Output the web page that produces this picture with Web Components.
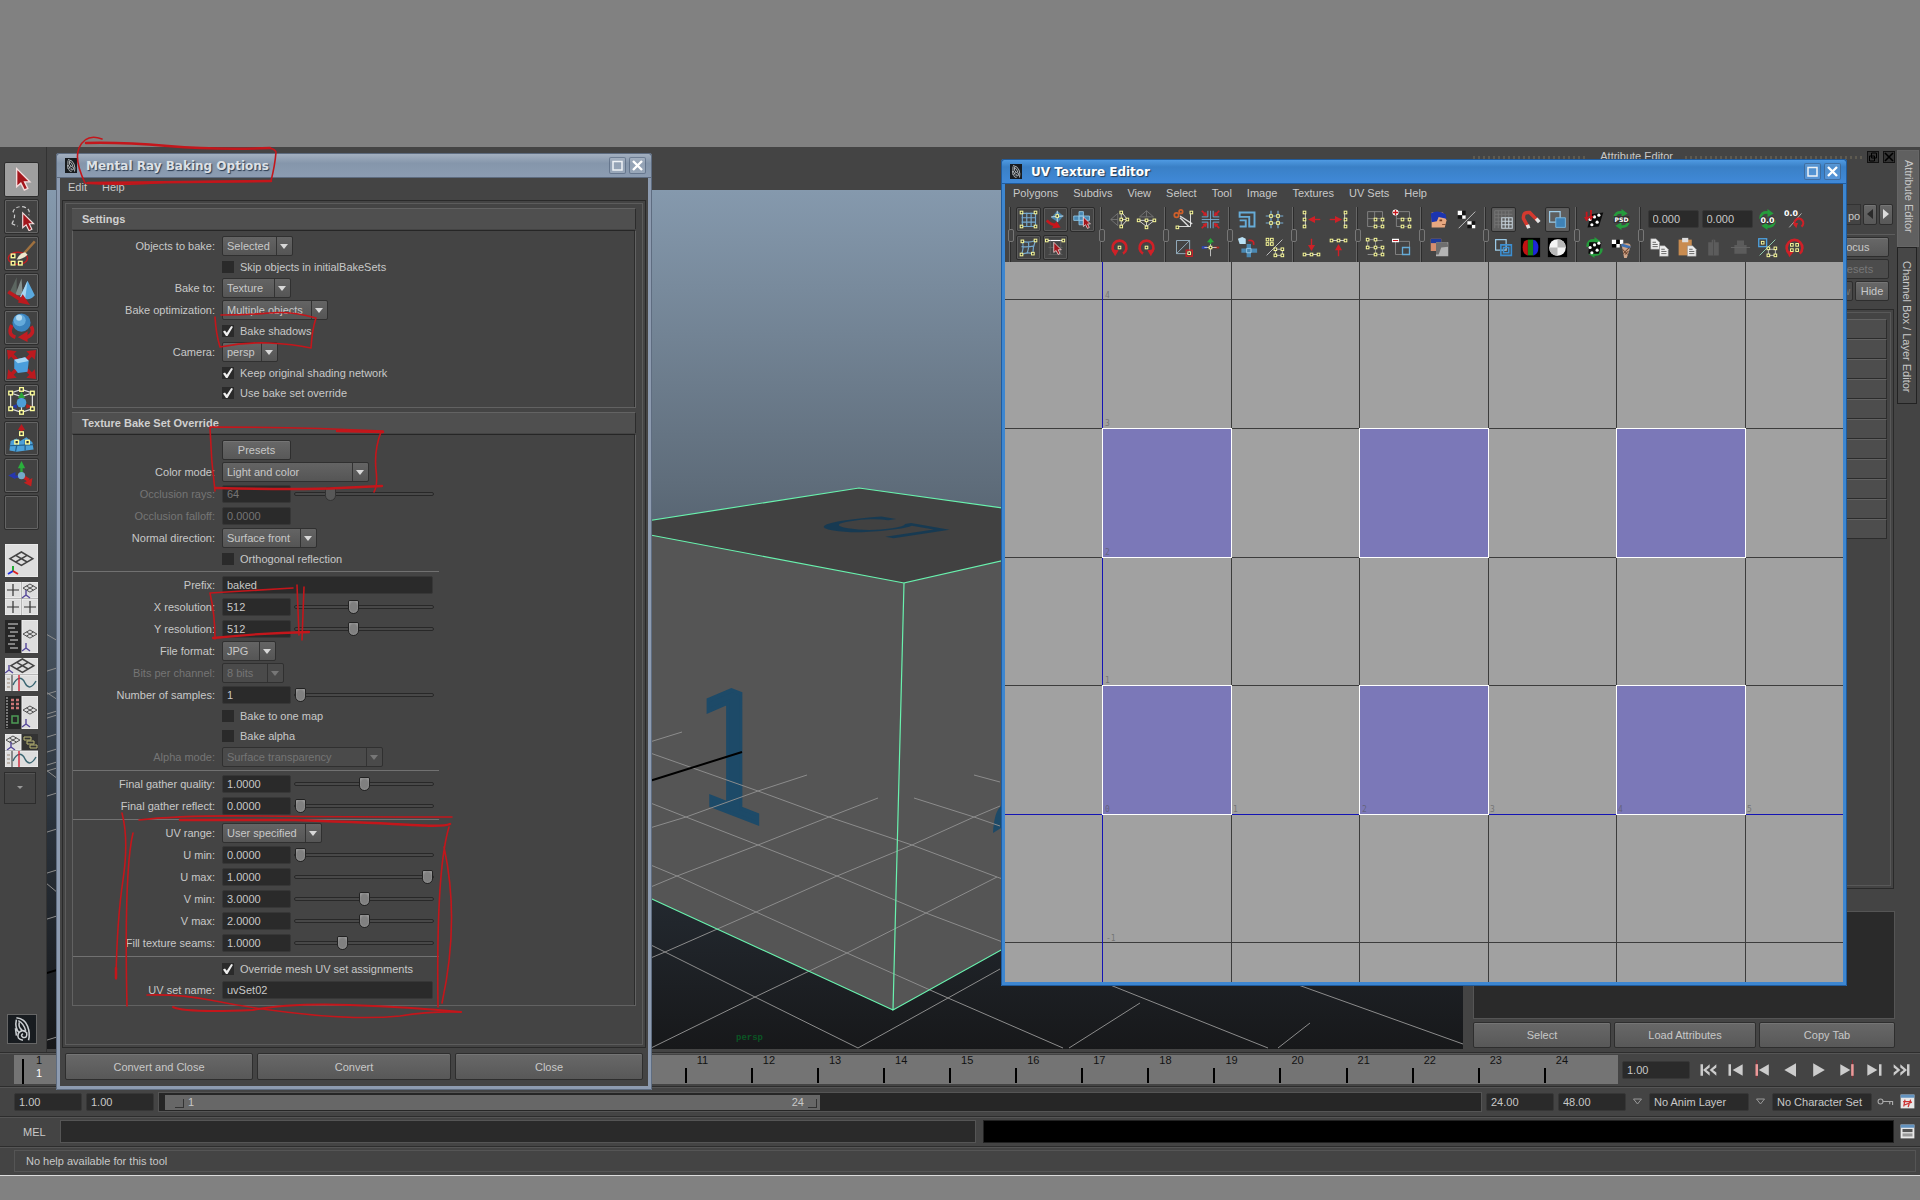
<!DOCTYPE html>
<html lang="en">
<head>
<meta charset="utf-8">
<title>Mental Ray Baking Options</title>
<style>
    body {
        margin: 0;
        min-height: 100vh;
        background: #818181;
        color: #c8c8c8;
        font: 11px/14px "Liberation Sans", Arial, sans-serif;
    }
</style>
</head>
<body>
<maya-desktop></maya-desktop>

<script>
// ---------- shared styles ----------
const base = `
    :host, * { box-sizing: border-box; }
    button, input, select { font: inherit; color: inherit; margin: 0; border-radius: 0; outline: none; }
    button { padding: 0; cursor: pointer; }
    .push {
        background: linear-gradient(#686868, #585858);
        border: 1px solid #2e2e2e;
        border-radius: 2px;
        box-shadow: inset 0 1px #757575;
    }
    .push:disabled { background: #4c4c4c; color: #777; box-shadow: none; }
    .field {
        background: #2a2a2a;
        border: 1px solid #373737;
        border-radius: 2px;
        padding: 0 4px;
        height: 18px;
        min-width: 0;
    }
`;

// ---------- icon helpers ----------
const dot = (x, y, c = '#ffff9c') => `<rect x="${x - 1.5}" y="${y - 1.5}" width="3" height="3" fill="#333" stroke="${c}" stroke-width="1.1"/>`;
const dots = (list, c) => list.map(p => dot(p[0], p[1], c)).join('');
const line = (d, c = '#75a9cf', w = 1.3) => `<path d="${d}" fill="none" stroke="${c}" stroke-width="${w}"/>`;
const fill = (d, c) => `<path d="${d}" fill="${c}"/>`;
const cursor = (x, y, s = 1) => `<path transform="translate(${x} ${y}) scale(${s})" d="M0 0V13L3 10.500L5.500 15.500L8 14.300L5.700 9.500H9.500Z" fill="#a3161c" stroke="#f4dede" stroke-width="1"/>`;
const cross = 'M8 3h5v5h7v5h-7v5H8v-5H2V8h6z';
const faces = `<g fill="#fff"><circle cx="7" cy="12" r="1.800"/><circle cx="12" cy="9" r="1.800"/><circle cx="17" cy="7" r="1.800"/><circle cx="9" cy="18" r="1.800"/><circle cx="15" cy="15" r="1.800"/></g>`;
const sheet = (x, y) => `<path d="M${x} ${y}h6l4 4v8H${x}z" fill="#eee" stroke="#888" stroke-width=".6"/><path d="M${x + 2} ${y + 4}h4M${x + 2} ${y + 6.5}h6M${x + 2} ${y + 9}h6" stroke="#555" stroke-width="1"/>`;
const cycle = line('M4 11Q4 3 13 4', '#259c3c', 3) + fill('M12 0L19 5L12 9z', '#259c3c') + line('M20 13Q20 21 11 20', '#259c3c', 3) + fill('M12 15L5 19L12 24z', '#259c3c');
const ring = line('M8 19A8 8 0 1 1 16 19', '#cf2027', 3);

const icons = {
    lattice: line('M4 5h16M4 10h16M4 15h16M4 20h16M5 4v16M10 4v16M15 4v16M20 4v16') + dots([[4, 4], [20, 4], [4, 20], [20, 20]]),
    flip: fill('M14 2l7 6-6 7-8-5z', '#4b83a8') + line('M14 2v13M7 9l14-1', '#cfe3ef', 1) + dot(14, 8) + line('M2 13Q7 19 15 18', '#c8161c', 3) + fill('M13 14l5 7-10 1z', '#c8161c'),
    shellSelect: fill(cross, '#4a88b2') + line('M8 8h5v5H8zM2 8h18v5H2zM8 3h5v15H8z', '#8fc3e4', 1) + cursor(13, 9, .85),
    smudge: line('M5 5Q12 7 20 4M4 11Q11 12 19 10M4 20Q10 17 17 19M5 5Q7 12 4 20M12 6Q13 13 10 19M20 4Q17 11 17 19') + dots([[5, 5], [20, 4], [4, 20], [17, 19]]),
    edgeSelect: line('M2 4h20', '#fff') + line('M6 4v16M18 4v16M4 20h16M4 12h16', '#606060', 1) + dots([[2, 4], [21, 4]]) + cursor(10, 6, .9),
    flipU: line('M10 5L2 12L10 19zM2 12h8', '#777', 1) + line('M14 3L21 12L14 20zM14 12h7', '#ddd', 1) + dots([[14, 4], [14, 20], [21, 12], [14, 12]]),
    flipV: line('M4 9L12 2L20 9zM12 2v7', '#777', 1) + line('M3 13h18L12 20zM12 13v7', '#ddd', 1) + dots([[3, 13], [21, 13], [12, 21], [12, 13]]),
    rotL: ring + fill('M3 14l8 1-4 7z', '#cf2027') + dot(12, 12),
    rotR: ring + fill('M21 14l-8 1 4 7z', '#cf2027') + dot(12, 12),
    cut: line('M8 8L22 17M8 10L18 20', '#ddd', 1.6) + line('M20 4V20H5', '#eee', 1) + `<circle cx="4" cy="7" r="2.500" fill="none" stroke="#d0602a" stroke-width="2"/><circle cx="9" cy="3" r="2" fill="none" stroke="#d0602a" stroke-width="2"/>` + dots([[21, 4], [5, 21]]),
    split: line('M9 2v7H2M15 2v7h7M9 22v-7H2M15 22v-7h7M12 2v20M2 12h20', '#79aed3', 1) + line('M2 2l5 5M22 2l-5 5M2 22l5-5M22 22l-5-5', '#cf2027', 2) + fill('M8 8l-5-1 4-4zM16 8l5-1-4-4zM8 16l-5 1 4 4zM16 16l5 1-4 4z', '#cf2027'),
    sew: line('M4 4h15v15H4zM4 19L19 4', '#9bb8ca', 1) + `<rect x="15" y="15" width="7" height="7" fill="none" stroke="#d31d23" stroke-width="1.400"/>` + dot(18.5, 18.5),
    move: line('M12 8V3', '#2aa63a', 2) + fill('M8 6l4-5 4 5z', '#2aa63a') + line('M8 12H2', '#3048b6', 3) + line('M16 12h6', '#b9291f', 2) + line('M12 8v14M5 12h14', '#ccc', 1) + dot(12, 12),
    layout: line('M3 4h17v16h-6V9H3zM3 13h7v7H3', '#66acd8', 2.2),
    grid: line('M8 2v20M16 2v20M2 8h20M2 16h20', '#79aed3', 1.4) + dots([[8, 8], [16, 8], [8, 16], [16, 16]]),
    unfold: `<g transform="translate(3 5)">${fill(cross, '#4a88b2')}${line('M8 8h5v5H8z', '#9acbe9', 1)}</g>` + fill('M1 2l5-2 4 2v6H3z', '#b9e0f4') + line('M13 4Q20 3 19 9', '#cf2027', 2),
    align: line('M3 21L21 3', '#ccc', 1) + line('M13 14h8v7h-8z', '#ccc', 1) + dots([[4, 3], [9, 3], [4, 8], [9, 8], [13, 14], [21, 14], [13, 21], [21, 21]]),
    minU: line('M5 4v16', '#ddd', 1) + line('M12 12h10', '#cf2027', 1.6) + fill('M8 12l8-4v8z', '#cf2027') + dots([[4, 4], [4, 12], [4, 20]]),
    maxU: line('M19 4v16', '#ddd', 1) + line('M2 12h10', '#cf2027', 1.6) + fill('M16 12l-8-4v8z', '#cf2027') + dots([[20, 4], [20, 12], [20, 20]]),
    minV: line('M4 20h16', '#ddd', 1) + line('M12 2v10', '#cf2027', 1.6) + fill('M12 16l-4-7h8z', '#cf2027') + dots([[4, 20], [12, 20], [20, 20]]),
    maxV: line('M4 4h16', '#ddd', 1) + line('M12 12v10', '#cf2027', 1.6) + fill('M12 8l-4 7h8z', '#cf2027') + dots([[4, 4], [12, 4], [20, 4]]),
    iso: line('M3 3h17v17H3zM3 11h17M11 3v17', '#888', 1) + dots([[12, 12], [20, 12], [12, 20], [20, 20]]),
    isoAdd: line('M5 3h15v17H5zM5 11h15', '#888', 1) + dots([[12, 12], [20, 12], [12, 20], [20, 20]]) + `<circle cx="4" cy="4" r="3.500" fill="#fff"/>` + line('M1 4h6M4 1v6', '#c8161c', 1.5),
    isoGrid: line('M3 3h9v9H3zM12 12h8v8h-8zM12 4h8M3 20h8', '#999', 1) + dots([[3, 3], [12, 3], [3, 12], [12, 12], [20, 12], [12, 20], [20, 20]]),
    isoSub: line('M4 5h16v15H4z', '#888', 1) + line('M12 12h8v8h-8z', '#66acd8', 1.5) + `<rect x="0" y="2" width="8" height="4" fill="#fff"/>` + line('M1 4h6', '#c8161c', 1.2),
    portrait: fill('M3 4h13l4 9-2 8H3z', '#e8a880') + fill('M2 5Q10 0 19 6L20 11L11 9L9 14L3 15z', '#1c35b0') + fill('M12 12h3v2h-3zM15 17h4v1h-4z', '#703c22'),
    checkers: line('M3 22L22 3', '#ccc', 1) + fill('M2 2h5v5H2zM7 7h4v4H7z', '#fff') + fill('M7 2h4v5H7zM2 7h5v4H2z', '#111') + fill('M13 14h5v4h-5zM18 18h4v4h-4z', '#fff') + fill('M18 14h4v4h-4zM13 18h5v4h-5z', '#111'),
    portraitGray: fill('M2 2h12v14H2z', '#d58e6f') + fill('M2 2h12v5H2z', '#1f3b9c') + fill('M8 6h14v16H8z', '#b4b4b4') + fill('M8 6h13l1 5-8 1-3 8H8z', '#6e6e6e'),
    dense: line('M2 2v20M6 2v20M10 2v20M14 2v7M18 2v7M2 2h20M2 6h20M2 10h7M2 14h7M2 18h7', '#777', 1) + line('M10 10h12v12H10zM14 10v12M18 10v12M10 14h12M10 18h12', '#c7d3dc', 1.2),
    magnet: `<path d="M9 20L4 11Q3 3 11 4L20 13" fill="none" stroke="#d43a2f" stroke-width="4"/><path d="M8.500 18l1.500 4M18.500 11l3.500 4" stroke="#e4e4e4" stroke-width="4"/>`,
    overlap: line('M3 3h12v12H3z', '#9ccbe8', 1.4) + `<path d="M10 10h11v11H10z" fill="#3f82b6" stroke="#7bbce6"/>`,
    overlapLine: line('M3 3h12v12H3z', '#9ccbe8', 1.4) + line('M9 9h12v12H9zM12 12h6v6h-6z', '#3c8fd2', 1.8),
    rgb: '<rect x="1" y="1" width="22" height="22" fill="#000"/>' + fill('M9 3Q3 4 3 12T9 21z', '#c31212') + fill('M9 3h6v18H9z', '#17831a') + fill('M15 3Q21 4 21 12T15 21z', '#1d26d8'),
    alpha: '<rect x="1" y="1" width="22" height="22" fill="#000"/><circle cx="12" cy="12" r="9.500" fill="#f4f4f4"/>' + fill('M12 12V2.500A9.500 9.500 0 0 1 21.500 12zM12 12v9.500A9.500 9.500 0 0 1 2.500 12z', '#b9b9b9'),
    bake: fill('M8 6L22 4L17 20L4 21z', '#0a0a0a') + faces + line('M3 3v10M8 1v9', '#c8161c', 2) + fill('M0 9h6l-3 5zM5 8h6l-3 5z', '#c8161c'),
    psd: cycle + '<rect x="3" y="8" width="18" height="8" fill="#333"/><text x="12" y="15" text-anchor="middle" font-family="DejaVu Sans" font-size="7" font-weight="700" fill="#fff">PSD</text>',
    bakeCycle: cycle + fill('M6 6h14L17 19H5z', '#0a0a0a') + faces,
    cone: fill('M1 3h5v5H1zM6 8h4v4H6zM10 3h4v5h-4z', '#fff') + fill('M6 3h4v5H6zM1 8h5v4H1z', '#000') + fill('M12 8Q24 5 22 12L18 24H15z', '#d0a68a') + line('M12 9l10 3', '#3f72b4', 3) + line('M13 14l6 6M21 12l-7 7M20 16l-4 4', '#6e4630', 1.2),
    zeroCycle: cycle + '<text x="12" y="16" text-anchor="middle" font-family="DejaVu Sans" font-size="9" font-weight="700" fill="#fff" stroke="#333" stroke-width="2" paint-order="stroke">0.0</text>',
    zeroRing: line('M6 21L20 5', '#bbb', 1) + line('M13 19A5 5 0 1 1 20 20', '#cf2027', 2.5) + fill('M10 16h6l-2 6z', '#cf2027') + '<text x="8" y="8" text-anchor="middle" font-family="DejaVu Sans" font-size="9" font-weight="700" fill="#fff">0.0</text>',
    copy: sheet(2, 2) + sheet(12, 10),
    paste: '<rect x="3" y="3" width="15" height="18" fill="#c98c50"/><rect x="7" y="1" width="7" height="5" fill="#ddd"/>' + sheet(13, 10),
    offU: fill('M6 6h4V3h4v3h4v15H6z', '#5c5c5c') + line('M12 2v20', '#4b4b4b', 1),
    offV: fill('M5 9h3V4h8v5h3v10H5z', '#5c5c5c') + line('M1 12h22', '#666', 1),
    pick: line('M3 21L21 3', '#9db', 1) + '<rect x="2" y="2" width="9" height="9" fill="none" stroke="#4da2e0" stroke-width="1.500"/>' + dot(6.5, 6.5) + line('M13 14h8v7h-8z', '#ccc', 1) + dots([[13, 13], [21, 13], [13, 21], [21, 21]]),
    ringGrid: line('M6 19A9 9 0 1 1 18 19', '#cf2027', 3) + fill('M3 15l8 2-5 6z', '#cf2027') + dots([[9, 9], [15, 9], [9, 15], [15, 15]]),

    // toolbox, drawn on the same 24 unit square
    arrow: cursor(8, 3, 1.15),
    lasso: line('M4 18Q8 11 5 8Q7 3 14 4Q20 6 18 11M4 18L9 20', '#ccc', 1).replace('<path', '<path stroke-dasharray="3 2"') + cursor(13, 9, .95),
    paint: '<ellipse cx="9" cy="16" rx="8" ry="5" fill="none" stroke="#bd1d22" stroke-width="1.200"/>' + line('M23 2L14 12', '#a0713f', 2) + fill('M15 11Q10 12 8 17Q13 17 17 13z', '#eee6cf') + dots([[5, 14], [5, 20], [11, 20]]),
    moveTool: fill('M8 1L2 14Q5 16 8 14z', '#5c6660') + fill('M12 2L7 15Q10 17 13 15z', '#838f8c') + fill('M17 4L11 17Q18 22 23 16z', '#5aa9de') + fill('M17 4L15 19Q11 19 11 17z', '#a9d7f1') + line('M1 13L12 20', '#bb1a1f', 3) + fill('M13 15l6 9-10-2z', '#bb1a1f'),
    rotateTool: line('M4 10Q0 18 7 20M20 11Q24 18 14 21', '#c21c22', 3) + fill('M17 15l-8 5 8 4z', '#c21c22') + '<circle cx="12" cy="8" r="7.500" fill="#3a82bd"/><circle cx="10.500" cy="6" r="5" fill="#64aadb"/><circle cx="10" cy="4" r="2.500" fill="#b4dbf2"/>',
    scaleTool: line('M2 2l6 6M22 2l-6 6M2 22l6-6M22 22l-6-6', '#bb1a1f', 3) + fill('M0 0l8 1-7 7zM24 0l-8 1 7 7zM0 24l8-1-7-7zM24 24l-8-1 7-7z', '#bb1a1f') + fill('M6 8l9-2 3 3-1 9-8 1-3-4z', '#4a9edb') + fill('M6 8l9-2 3 3-9 2z', '#a5d6f3'),
    manip: line('M3 5L12 2L21 5V18L12 21L3 18zM3 5l9 3 9-3M12 8v13', '#ddd', 1) + '<circle cx="12" cy="13" r="4" fill="#4e9ed8"/>' + fill('M12 4l3 5H9z', '#2da53a') + fill('M21 16l-5 2v-4z', '#b4221f') + fill('M4 16l4 2v-4z', '#2436ae') + dots([[3, 5], [21, 5], [3, 18], [21, 18], [12, 2], [12, 21]]),
    soft: fill('M3 14l5-2 3 2 5-3 5 4 1 6-14 2-6-1z', '#4ba0d8') + line('M2 18l20-1M9 13L7 23M15 13v9', '#235d88', 1) + line('M12 9V4', '#bb1a1f', 2) + fill('M9 5l3-5 3 5z', '#bb1a1f') + dots([[12, 8], [8, 15], [17, 15]]),
    pivot: line('M12 10V5', '#2aa63a', 2) + fill('M9 6l3-6 3 6z', '#2ab03c') + line('M12 13H6', '#2737ae', 2) + fill('M1 12l6-3v6z', '#2737ae') + line('M12 12l6 4', '#c42020', 3) + fill('M21 14l-1 7-6-3z', '#c42020') + '<circle cx="12" cy="12" r="3" fill="#74aac8"/>',
    none: '',

    // playback
    first: fill('M3 5h3v14H3zM14 5v4l-4 3 4 3v4L6 12zM22 5v4l-4 3 4 3v4L14 12z', '#ccc'),
    prevKeyless: fill('M3 5h3v14H3zM20 5v14L8 12z', '#ccc'),
    prevKey: line('M4.500 0v22', '#8e2630', 1) + fill('M3 5h3v14H3z', '#e99') + fill('M19 5v14L7 12z', '#ccc'),
    back: fill('M18 4v16L4 12z', '#ccc'),
    play: fill('M5 4v16l14-8z', '#ccc'),
    nextKey: line('M18.500 0v22', '#8e2630', 1) + fill('M17 5h3v14h-3z', '#e99') + fill('M4 5v14l12-7z', '#ccc'),
    next: fill('M18 5h3v14h-3zM4 5v14l12-7z', '#ccc'),
    last: fill('M18 5h3v14h-3zM2 5v4l4 3-4 3v4l8-7zM10 5v4l4 3-4 3v4l8-7z', '#ccc'),
    key: '<circle cx="5" cy="12" r="3.500" fill="none" stroke="#aaa" stroke-width="1.500"/>' + line('M8 12h14v5M18 12v4', '#aaa', 1.6),
    prefs: '<rect x="1" y="1" width="22" height="22" fill="#e8e8e8"/><rect x="1" y="1" width="22" height="5" fill="#6393c0"/>' + line('M5 12h13M8 9l-2 11M17 9l-4 12M6 18l13-5', '#cc3333', 2),
    script: '<rect x="1" y="1" width="22" height="22" fill="#e8e8e8"/><rect x="1" y="1" width="22" height="5" fill="#6393c0"/><rect x="4" y="8" width="16" height="5" fill="#555"/><rect x="4" y="15" width="16" height="5" fill="#999"/>'
};

const svg = (name, size) => `<svg viewBox="0 0 24 24" width="${size}" height="${size}" aria-hidden="true">${icons[name]}</svg>`;

const logo = `
    <svg viewBox="0 0 24 30" aria-hidden="true">
        <rect width="24" height="30" fill="#181c20"/>
        <path d="M6 3Q15 4 18 12Q21 20 19 27M8 6Q14 9 16 17M6 5Q4 14 9 19M9 8Q8 14 12 16M13 27Q6 26 8 20Q12 14 17 19Q18 25 13 24Q10 22 13 20M5 14L6 22" fill="none" stroke="#c9cdd0" stroke-width="1.700"/>
    </svg>`;

// ---------- floating window ----------
class AppWindow extends HTMLElement {
    connectedCallback() {
        this.attachShadow({ mode: 'open' });
        this.shadowRoot.innerHTML = `
            <style>${base}
                :host {
                    display: flex;
                    flex-direction: column;
                    border: 4px solid var(--frame);
                    border-top: 0;
                    outline: 1px solid var(--edge);
                    outline-offset: -1px;
                    border-radius: 3px 3px 0 0;
                    background: #444;
                }
                header {
                    display: flex;
                    align-items: center;
                    height: 25px;
                    margin: 0 -4px;
                    padding: 0 5px 0 8px;
                    gap: 3px;
                    background: var(--bar);
                    border: 1px solid var(--edge);
                    border-radius: 3px 3px 0 0;
                }
                header svg { width: 12px; height: 15px; }
                h1 {
                    flex: 1;
                    margin: 0 0 0 6px;
                    font: bold 12px/16px "DejaVu Sans", sans-serif;
                    color: var(--title);
                    text-shadow: 1px 1px 1px #2a3a50;
                }
                header button {
                    display: grid;
                    place-items: center;
                    width: 17px;
                    height: 17px;
                    background: rgba(255, 255, 255, .12);
                    border: 1px solid rgba(30, 50, 80, .4);
                    border-radius: 2px;
                }
                header button svg { width: 13px; height: 13px; }
                .content { flex: 1; display: flex; flex-direction: column; min-height: 0; }
                nav { display: flex; align-items: center; gap: 15px; height: 19px; padding: 0 8px 1px; }
                nav a { color: inherit; text-decoration: none; }
            </style>
            <header>
                ${logo}
                <h1>${this.getAttribute('heading')}</h1>
                <button aria-label="Maximize"><svg viewBox="0 0 13 13"><path d="M2 2.500h9v8.500H2z" fill="none" stroke="#eef2f6" stroke-width="1.500"/></svg></button>
                <button aria-label="Close window"><svg viewBox="0 0 13 13"><path d="M2 2l9 9M11 2l-9 9" stroke="#fff" stroke-width="2.400"/></svg></button>
            </header>
            <div class="content">
                <nav>${this.getAttribute('menu').split(',').map(m => `<a href="#">${m}</a>`).join('')}</nav>
                <slot></slot>
            </div>
        `;
    }
}

// ---------- one row of the option form ----------
class OptionRow extends HTMLElement {
    connectedCallback() {
        const get = n => this.getAttribute(n) || '';
        const off = this.hasAttribute('disabled') ? 'disabled' : '';
        const value = get('value');
        const kind = get('kind');
        const label = kind === 'check' || kind === 'button' ? '<span></span>' : `<label class="name" for="control">${get('label')}</label>`;
        const controls = {
            select: () => `<span class="pick" style="width:${get('width')}px"><select id="control" ${off}><option>${value}</option></select></span>`,
            check: () => `<label class="tick"><input type="checkbox" ${this.hasAttribute('checked') ? 'checked' : ''}>${get('label')}</label>`,
            button: () => `<button class="push">${value}</button>`,
            text: () => `<input id="control" class="field wide" value="${value}">`,
            number: () => `<input id="control" class="field" value="${value}" ${off}>` +
                (get('slide') ? `<input type="range" aria-label="${get('label')}" min="0" max="100" value="${get('slide')}" ${off}>` : '')
        };
        this.attachShadow({ mode: 'open' });
        this.shadowRoot.innerHTML = `
            <style>${base}
                :host {
                    display: grid;
                    grid-template-columns: 142px 1fr;
                    column-gap: 7px;
                    align-items: center;
                    height: 22px;
                }
                :host([kind="check"]) { height: 20px; }
                :host([disabled]) { color: #757575; }
                .name { text-align: right; white-space: nowrap; }
                .controls { display: flex; align-items: center; gap: 3px; }
                .field { width: 69px; }
                .wide { width: 211px; }
                .push { width: 69px; height: 20px; }
                .pick {
                    display: flex;
                    position: relative;
                    height: 20px;
                    background: linear-gradient(#646464, #555);
                    border: 1px solid #303030;
                    border-radius: 2px;
                }
                .pick::before { content: ""; position: absolute; right: 15px; top: 0; bottom: 0; width: 1px; background: #333; }
                .pick::after { content: ""; position: absolute; right: 4px; top: 7px; border: 4px solid transparent; border-top: 5px solid #d8d8d8; border-bottom: 0; }
                :host([disabled]) .pick { background: #4a4a4a; }
                :host([disabled]) .pick::after { border-top-color: #777; }
                select { appearance: none; width: 100%; background: none; border: 0; padding: 0 0 0 4px; opacity: 1; }
                .tick { display: flex; align-items: center; gap: 6px; }
                input[type="checkbox"] {
                    appearance: none;
                    display: grid;
                    place-items: center;
                    width: 12px;
                    height: 12px;
                    background: #2a2a2a;
                }
                input[type="checkbox"]:checked::before {
                    content: "";
                    width: 10px;
                    height: 10px;
                    background: #eee;
                    clip-path: polygon(0 55%, 20% 45%, 38% 68%, 82% 0, 100% 8%, 45% 100%, 30% 100%);
                }
                input[type="range"] { appearance: none; width: 140px; height: 16px; background: none; }
                input[type="range"]::-webkit-slider-runnable-track { height: 4px; background: #484848; border: 1px solid #282828; border-radius: 2px; }
                input[type="range"]::-webkit-slider-thumb {
                    appearance: none;
                    width: 11px;
                    height: 14px;
                    margin-top: -6px;
                    background: radial-gradient(#808080 50%, #a5a5a5);
                    border: 1px solid #222;
                    border-radius: 2px 2px 6px 6px;
                }
                input[type="range"]:disabled::-webkit-slider-thumb { background: #585858; border-color: #333; }
            </style>
            ${label}
            <div class="controls">${controls[kind]()}</div>
        `;
    }
}

class OptionGroup extends HTMLElement {
    connectedCallback() {
        this.attachShadow({ mode: 'open' });
        this.shadowRoot.innerHTML = `
            <style>
                :host { display: block; }
                h2 {
                    margin: 0 0 1px;
                    padding: 0 10px;
                    font: bold 11px/20px "Liberation Sans", Arial, sans-serif;
                    background: #4f4f4f;
                    border-top: 1px solid #636363;
                    border-right: 1px solid #2c2c2c;
                    color: #d0d0d0;
                }
                .body { padding: 4px 0; border: 1px solid #626262; border-top-color: #262626; box-shadow: inset -1px 0 #2c2c2c; }
                ::slotted(hr) { width: 366px; height: 1px; margin: 2px 0; border: 0; background: #717171; }
            </style>
            <h2>${this.getAttribute('heading')}</h2>
            <div class="body"><slot></slot></div>
        `;
    }
}

class BakeOptions extends HTMLElement {
    connectedCallback() {
        this.attachShadow({ mode: 'open' });
        this.shadowRoot.innerHTML = `
            <style>${base}
                :host { display: flex; flex-direction: column; flex: 1; padding: 3px 2px 6px; }
                .panel {
                    flex: 1;
                    display: flex;
                    flex-direction: column;
                    gap: 4px;
                    padding: 7px 9px 0;
                    border: 1px solid #2a2a2a;
                    outline: 1px solid #5c5c5c;
                    outline-offset: -4px;
                }
                footer { display: grid; grid-template-columns: 188px 194px 1fr; gap: 4px; padding: 5px 3px 0; }
                footer button { height: 27px; }
            </style>
            <div class="panel">
                <option-group heading="Settings">
                    <option-row kind="select" label="Objects to bake:" value="Selected" width="71"></option-row>
                    <option-row kind="check" label="Skip objects in initialBakeSets"></option-row>
                    <option-row kind="select" label="Bake to:" value="Texture" width="69"></option-row>
                    <option-row kind="select" label="Bake optimization:" value="Multiple objects" width="106"></option-row>
                    <option-row kind="check" label="Bake shadows" checked></option-row>
                    <option-row kind="select" label="Camera:" value="persp" width="56"></option-row>
                    <option-row kind="check" label="Keep original shading network" checked></option-row>
                    <option-row kind="check" label="Use bake set override" checked></option-row>
                </option-group>
                <option-group heading="Texture Bake Set Override">
                    <option-row kind="button" value="Presets"></option-row>
                    <option-row kind="select" label="Color mode:" value="Light and color" width="147"></option-row>
                    <option-row kind="number" label="Occlusion rays:" value="64" slide="24" disabled></option-row>
                    <option-row kind="number" label="Occlusion falloff:" value="0.0000" disabled></option-row>
                    <option-row kind="select" label="Normal direction:" value="Surface front" width="95"></option-row>
                    <option-row kind="check" label="Orthogonal reflection"></option-row>
                    <hr>
                    <option-row kind="text" label="Prefix:" value="baked"></option-row>
                    <option-row kind="number" label="X resolution:" value="512" slide="42"></option-row>
                    <option-row kind="number" label="Y resolution:" value="512" slide="42"></option-row>
                    <option-row kind="select" label="File format:" value="JPG" width="54"></option-row>
                    <option-row kind="select" label="Bits per channel:" value="8 bits" width="62" disabled></option-row>
                    <option-row kind="number" label="Number of samples:" value="1" slide="0.1"></option-row>
                    <option-row kind="check" label="Bake to one map"></option-row>
                    <option-row kind="check" label="Bake alpha"></option-row>
                    <option-row kind="select" label="Alpha mode:" value="Surface transparency" width="161" disabled></option-row>
                    <hr>
                    <option-row kind="number" label="Final gather quality:" value="1.0000" slide="50"></option-row>
                    <option-row kind="number" label="Final gather reflect:" value="0.0000" slide="0.1"></option-row>
                    <hr>
                    <option-row kind="select" label="UV range:" value="User specified" width="100"></option-row>
                    <option-row kind="number" label="U min:" value="0.0000" slide="0.1"></option-row>
                    <option-row kind="number" label="U max:" value="1.0000" slide="100"></option-row>
                    <option-row kind="number" label="V min:" value="3.0000" slide="50"></option-row>
                    <option-row kind="number" label="V max:" value="2.0000" slide="50"></option-row>
                    <option-row kind="number" label="Fill texture seams:" value="1.0000" slide="33"></option-row>
                    <hr>
                    <option-row kind="check" label="Override mesh UV set assignments" checked></option-row>
                    <option-row kind="text" label="UV set name:" value="uvSet02"></option-row>
                </option-group>
            </div>
            <footer>
                <button class="push">Convert and Close</button>
                <button class="push">Convert</button>
                <button class="push">Close</button>
            </footer>
        `;
    }
}

// ---------- UV texture editor ----------
class UvToolbar extends HTMLElement {
    connectedCallback() {
        // a star marks a framed button, a plus one that is switched on
        const groups = [
            ['*lattice', '*flip', '*shellSelect', '*smudge', '*edgeSelect'],
            ['flipU', 'flipV', 'rotL', 'rotR'],
            ['cut', 'split', 'sew', 'move'],
            ['layout', 'grid', 'unfold', 'align'],
            ['minU', 'maxU', 'minV', 'maxV'],
            ['iso', 'isoAdd', 'isoGrid', 'isoSub'],
            ['portrait', 'checkers', 'portraitGray'],
            ['+dense', 'magnet', '+overlap', 'overlapLine', 'rgb', 'alpha'],
            ['bake', 'psd', 'bakeCycle', 'cone']
        ];
        const button = n => {
            const name = n.replace(/[*+]/, '');
            const cls = n[0] === '*' ? 'framed' : n[0] === '+' ? 'framed on' : '';
            return `<button class="${cls}" aria-label="${name}">${svg(name, 21)}</button>`;
        };
        this.attachShadow({ mode: 'open' });
        this.shadowRoot.innerHTML = `
            <style>${base}
                :host { display: flex; height: 59px; padding: 4px 0 0 1px; }
                .group {
                    display: grid;
                    grid-template: 28px 27px / repeat(var(--cols), 27px);
                    padding-left: 10px;
                    background:
                        linear-gradient(#666, #666) 3px 0 / 1px 100% no-repeat,
                        linear-gradient(#2c2c2c, #2c2c2c) 4px 0 / 1px 100% no-repeat;
                    position: relative;
                }
                .group::before {
                    content: "";
                    position: absolute;
                    left: 2px;
                    top: 22px;
                    width: 4px;
                    height: 11px;
                    background: #444;
                    border: 1px solid #777;
                    border-radius: 2px;
                }
                button { display: grid; place-items: center; width: 25px; height: 25px; background: none; border: 1px solid transparent; border-radius: 2px; }
                .framed { border-color: #2b2b2b; box-shadow: inset 0 0 0 1px #5b5b5b; }
                .on { background: #5e5e5e; }
                .entry { justify-items: center; }
                .entry .field { grid-column: span 2; width: 51px; margin-top: 3px; }
            </style>
            ${groups.map(g => `<div class="group" style="--cols:${g.length > 4 ? 3 : 2}">${g.map(button).join('')}</div>`).join('')}
            <div class="group entry" style="--cols:6">
                <input class="field" aria-label="U" value="0.000">
                <input class="field" aria-label="V" value="0.000">
                ${['zeroCycle', 'zeroRing', 'copy', 'paste', 'offU', 'offV', 'pick', 'ringGrid'].map(button).join('')}
            </div>
        `;
    }
}

class UvCanvas extends HTMLElement {
    connectedCallback() {
        const xs = [97, 226, 354, 483, 611, 740];
        const ys = [37, 166, 295, 423, 552, 680];
        const tiles = [[97, 166], [354, 166], [611, 166], [97, 423], [354, 423], [611, 423]];
        const labels = [[100, 36, 4], [100, 164, 3], [100, 293, 2], [100, 421, 1], [100, 550, 0], [228, 550, 1], [357, 550, 2], [485, 550, 3], [613, 550, 4], [742, 550, 5], [101, 679, -1]];
        this.attachShadow({ mode: 'open' });
        this.shadowRoot.innerHTML = `
            <style>
                :host { display: block; flex: 1; min-height: 0; background: #a1a1a1; }
                svg { display: block; width: 100%; height: 100%; }
                text { font: 8px "DejaVu Sans Mono", monospace; fill: #555; fill-opacity: .6; }
            </style>
            <svg viewBox="0 0 838 720" preserveAspectRatio="xMinYMin slice" shape-rendering="crispEdges">
                <path d="${xs.map(x => `M${x}.5 0V900`).join('')}${ys.map(y => `M0 ${y}.5H1200`).join('')}" stroke="#3c3c3c" fill="none"/>
                <path d="M97.500 0V900M0 552.500H1200" stroke="#1414b4" stroke-width="1.600"/>
                ${tiles.map(t => `<rect x="${t[0]}.5" y="${t[1]}.5" width="129" height="129" fill="#7b78b8" stroke="#fff"/>`).join('')}
                ${labels.map(l => `<text x="${l[0]}" y="${l[1]}">${l[2]}</text>`).join('')}
            </svg>
        `;
    }
}

// ---------- left toolbox ----------
class ToolBox extends HTMLElement {
    connectedCallback() {
        const tools = ['arrow', 'lasso', 'paint', 'moveTool', 'rotateTool', 'scaleTool', 'manip', 'soft', 'pivot', 'none'];
        const plane = (x, y, s) => `<g transform="translate(${x} ${y}) scale(${s})"><path d="M0 7L12 0L24 7L12 14zM6 3.500L18 10.500M18 3.500L6 10.500" fill="none" stroke="#444" stroke-width="1.600"/></g>`;
        const pane = (x, y, w, h) => `<rect x="${x}" y="${y}" width="${w}" height="${h}" fill="#dedede" stroke="#f8f8f8" stroke-width=".8"/>`;
        const plus = (x, y) => `<path d="M${x - 6} ${y}h12M${x} ${y - 6}v12" stroke="#333" stroke-width="1.200"/>`;
        const axis = (x, y) => `<path d="M${x} ${y}v-5M${x} ${y}l-4 3M${x} ${y}l4 3" stroke="#55489a" stroke-width="1.400"/>`;
        const graph = pane(0, 17, 33, 16) + '<path d="M7 17v16" stroke="#333"/><path d="M2 21h3M2 25h3M2 29h3" stroke="#987"/><path d="M8 27C12 18 17 19 20 25S27 30 31 23" fill="none" stroke="#3a6672" stroke-width="1.500"/><path d="M14 17v16" stroke="#d22538" stroke-width="1.400"/>';
        const side = pane(17, 0, 16, 33) + plane(18, 10, .58) + axis(21, 28);
        const layouts = [
            pane(0, 0, 33, 33) + plane(5, 8, .95) + '<path d="M8 27v-5" stroke="#2a3" stroke-width="2"/><path d="M8 27l-5 3" stroke="#23d" stroke-width="2"/><path d="M8 27l5 3" stroke="#d22" stroke-width="2"/>',
            pane(0, 0, 16, 16) + pane(17, 0, 16, 16) + pane(0, 17, 16, 16) + pane(17, 17, 16, 16) + plus(8, 8) + plus(8, 25) + plus(25, 25) + plane(18, 2, .58) + axis(21, 13),
            '<rect width="16" height="33" fill="#262626"/><path d="M3 4h10M3 8h7M5 12h8M3 16h7M5 20h8M3 24h7M5 28h8" stroke="#ddd"/>' + side,
            pane(0, 0, 33, 16) + plane(6, 1, .95) + axis(4, 12) + graph,
            '<rect width="16" height="33" fill="#262626"/><path d="M2 1v31" stroke="#777" stroke-width="2" stroke-dasharray="2 1"/><path d="M6 4h9M6 8h9M6 12h9" stroke="#c77" stroke-width="2.500" stroke-dasharray="3 2"/><path d="M7 20h6v7H7z" fill="none" stroke="#4d9a55" stroke-width="1.500"/>' + side,
            pane(0, 0, 16, 16) + plane(1, 2, .58) + axis(6, 13) + '<rect x="17" width="16" height="16" fill="#333"/><path d="M19 3h7v3h-7zM22 7h7v3h-7zM25 11h7v3h-7z" fill="none" stroke="#bbb774"/>' + graph
        ];
        this.attachShadow({ mode: 'open' });
        this.shadowRoot.innerHTML = `
            <style>${base}
                :host { display: flex; flex-direction: column; width: 47px; padding: 15px 5px 8px 4px; border-right: 1px solid #333; }
                .tools, .layouts { display: grid; gap: 2px; width: 35px; }
                .tools button { display: grid; place-items: center; width: 35px; height: 35px; background: #424242; border: 1px solid #2d2d2d; border-radius: 2px; box-shadow: inset 0 0 0 1px #646464; }
                .tools button:first-child { background: #9f9f9f; box-shadow: none; }
                .layouts { margin-top: 14px; gap: 5px; }
                .layouts button { background: none; border: 0; height: 33px; padding-left: 1px; text-align: left; }
                .layouts svg { display: block; }
                .layouts .more { border: 1px solid #2d2d2d; width: 32px; height: 32px; box-shadow: inset 0 1px #555; text-align: center; padding: 0; }
                .more::after { content: ""; display: inline-block; border: 3px solid transparent; border-top-color: #999; }
                .about { margin: auto 0 0 3px; width: 30px; height: 30px; background: #181c20; border: 1px solid #666; }
                .about svg { display: block; width: 28px; height: 28px; }
            </style>
            <div class="tools">${tools.map(t => `<button aria-label="${t}">${svg(t, 29)}</button>`).join('')}</div>
            <div class="layouts">
                ${layouts.map((l, i) => `<button aria-label="Layout ${i + 1}"><svg width="33" height="33" viewBox="0 0 33 33">${l}</svg></button>`).join('')}
                <button class="more" aria-label="More layouts"></button>
            </div>
            <button class="about" aria-label="About">${logo}</button>
        `;
    }
}

// ---------- perspective view ----------
class ViewPort extends HTMLElement {
    connectedCallback() {
        const edge = [717, 751, 770, 670, 693, 713, 736, 764, 795, 831, 872, 918, 1039].map(y => `M44 ${y + 2}L60 ${y - 3}`).join('') + 'M46 634l12 7M46 692l12 8M46 770l12 9M46 883l12 10';
        this.attachShadow({ mode: 'open' });
        this.shadowRoot.innerHTML = `
            <style>
                :host { display: flex; flex: 1; min-width: 0; box-sizing: border-box; padding: 43px 0 3px; }
                svg { flex: 1; width: 100%; min-width: 0; background: linear-gradient(#8599ad, #5f6d7b 34%, #29313a 74%, #17181a); }
                .digit { font-family: "DejaVu Serif", serif; font-weight: 400; }
                .name { font: bold 9px "Liberation Mono", monospace; fill: #0b5524; }
            </style>
            <svg viewBox="47 190 1416 859" preserveAspectRatio="xMinYMin slice">
                <path d="M608 527L904 583L1146 528L1140 873L893 1010L615 882z" fill="#555"/>
                <path d="M608 527L859 488L1146 528L904 583z" fill="#414141"/>
                <text class="digit" font-size="100" fill="#173a52" transform="matrix(-1.45 .22 -1.05 -.18 890 514)">5</text>
                <text class="digit" font-size="166" fill="#1d4a68" stroke="#1d4a68" stroke-width="4" transform="matrix(.8 .31 0 1 692 798)">1</text>
                <path d="M1001 806Q994 812 993 833L1001 828z" fill="#1d4a68"/>
                <g fill="none" stroke="#8c8c8c" stroke-width="1">
                    <path d="M640 749L653 754L758 791L829 817L912 845L997 877L1463 1044"/>
                    <path d="M640 799L653 804L686 817L758 845L837 876L926 913L1000 941L1268 1048"/>
                    <path d="M640 861L653 866L677 876L756 912L847 953L948 998L1063 1048"/>
                    <path d="M640 941L653 946L665 952L755 997L858 1048M914 798L974 817L1000 826M974 775L1000 782"/>
                    <path d="M640 745L653 741L682 732M640 831L653 827L686 817L758 791L807 775M640 891L653 886L677 876L758 845L829 817L878 798"/>
                    <path d="M640 962L653 957L665 952L756 912L837 876L912 845L974 817L1000 806M640 1053L653 1047L755 997L847 953L926 913L997 877"/>
                    <path d="M858 1048L948 998L1000 969M1069 1048L1140 1003M1278 1048L1310 1023"/>
                    <path d="${edge}"/>
                </g>
                <path d="M640 784L742 752M44 974L60 969" stroke="#000" stroke-width="2"/>
                <path d="M904 583L608 527L859 488L1146 528L904 583L893 1010L1140 873M893 1010L615 882" fill="none" stroke="#69f2ae" stroke-width="1.200"/>
                <text class="name" x="736" y="1040">persp</text>
            </svg>
        `;
    }
}

// ---------- right panel ----------
class AttributeEditor extends HTMLElement {
    connectedCallback() {
        this.attachShadow({ mode: 'open' });
        this.shadowRoot.innerHTML = `
            <style>${base}
                :host { display: flex; width: 457px; padding: 3px 1px 4px 10px; }
                .panel { flex: 1; display: flex; flex-direction: column; min-width: 0; }
                header { display: flex; align-items: center; gap: 4px; height: 14px; }
                header i { flex: 1; height: 3px; background: repeating-linear-gradient(90deg, #5e5a50 0 2px, transparent 2px 5px); }
                header i:last-of-type { flex: 0 1 178px; }
                header button { display: grid; place-items: center; width: 12px; height: 12px; background: #333; border: 1px solid #111; }
                header span { line-height: 12px; height: 14px; padding: 0 8px; }
                .nodes { display: flex; justify-content: flex-end; gap: 2px; margin-top: 40px; padding-right: 2px; height: 21px; }
                .nodes a { color: inherit; text-decoration: none; width: 24px; padding: 4px 2px 0 10px; border: 1px solid #333; }
                .nodes button { width: 14px; }
                .frame { flex: 1; display: flex; flex-direction: column; margin-top: 9px; border-top: 1px solid #5c5c5c; }
                .actions { display: grid; grid-template-columns: 33px 34px; gap: 2px; justify-content: end; padding: 2px 6px 0 0; }
                .actions button { height: 20px; }
                .actions .long { grid-column: span 2; }
                .list { flex: 1; margin: 8px 1px 22px 0; border: 1px solid #2a2a2a; outline: 1px solid #585858; outline-offset: -4px; padding: 9px 6px; }
                .list div { height: 20px; background: #4d4d4d; border: 1px solid #2c2c2c; border-top-color: #626262; }
                .notes { height: 108px; background: #2a2a2a; border: 1px solid #555; }
                footer { display: grid; grid-template-columns: 138px 142px 1fr; gap: 3px; padding-top: 3px; }
                footer button { height: 26px; }
                .tabs { display: flex; flex-direction: column; width: 22px; margin-left: 2px; }
                .tabs a { writing-mode: vertical-rl; color: inherit; text-decoration: none; width: 20px; line-height: 18px; padding: 13px 0 11px; background: #474747; border: 1px solid #222; }
                .tabs a:first-child { width: 22px; background: #606060; border-color: #666; padding: 9px 0 13px; }
            </style>
            <div class="panel">
                <header>
                    <i></i><span>Attribute Editor</span><i></i>
                    <button aria-label="Float"><svg width="10" height="10" viewBox="0 0 10 10"><path d="M3.500 1h5v5h-5zM1.500 4h5v5h-5z" fill="none" stroke="#000"/></svg></button>
                    <button aria-label="Close panel"><svg width="10" height="10" viewBox="0 0 10 10"><path d="M1 1l8 8M9 1L1 9" stroke="#000" stroke-width="1.600"/></svg></button>
                </header>
                <div class="nodes">
                    <a href="#">po</a>
                    <button class="push" aria-label="Previous tab"><svg width="8" height="10" viewBox="0 0 8 10"><path d="M7 0v10L1 5z" fill="#2a2a2a"/></svg></button>
                    <button class="push" aria-label="Next tab"><svg width="8" height="10" viewBox="0 0 8 10"><path d="M1 0v10l6-5z" fill="#ddd"/></svg></button>
                </div>
                <div class="frame">
                    <div class="actions">
                        <button class="push long">Focus</button>
                        <button class="push long" disabled>Presets</button>
                        <button class="push" disabled>Show</button>
                        <button class="push">Hide</button>
                    </div>
                    <div class="list">${'<div></div>'.repeat(11)}</div>
                </div>
                <div class="notes"></div>
                <footer>
                    <button class="push">Select</button>
                    <button class="push">Load Attributes</button>
                    <button class="push">Copy Tab</button>
                </footer>
            </div>
            <nav class="tabs"><a href="#">Attribute Editor</a><a href="#">Channel Box / Layer Editor</a></nav>
        `;
    }
}

// ---------- bottom bars ----------
class BottomBars extends HTMLElement {
    connectedCallback() {
        // frames 2 to 10 lie behind the options window and carry no number
        const frames = Array.from({ length: 24 }, (_, i) => i + 1)
            .map(n => n === 1 ? '<span class="now">1<b>1</b></span>' : `<span>${n > 10 ? n : ''}</span>`).join('');
        const play = ['first', 'prevKeyless', 'prevKey', 'back', 'play', 'nextKey', 'next', 'last'];
        this.attachShadow({ mode: 'open' });
        this.shadowRoot.innerHTML = `
            <style>${base}
                :host { display: block; }
                .bar { display: flex; align-items: center; height: 30px; border-top: 1px solid #2d2d2d; box-shadow: inset 0 1px #555; padding: 0 4px 0 14px; gap: 4px; }
                .time { height: 34px; }
                .help { height: 29px; }
                .ticks { flex: 1; display: flex; height: 29px; padding: 0 8px; background: #747474; color: #111; }
                .ticks span { flex: 1 1 0; padding-left: 12px; line-height: 10px; background: linear-gradient(#000, #000) 0 13px / 2px 15px no-repeat; }
                .ticks .now { padding-left: 14px; background: linear-gradient(#000, #000) 0 4px / 2px 25px no-repeat; }
                .now b { display: block; font-weight: 400; color: #fff; line-height: 16px; }
                .num { width: 68px; }
                .play { display: flex; justify-content: space-between; width: 214px; margin: 0 4px; }
                .play button, .icon { display: grid; place-items: center; width: 20px; height: 22px; background: none; border: 0; }
                .icon { width: 18px; }
                .range { flex: 1; height: 20px; background: #262626; border: 1px solid #555; padding: 2px 0 0 6px; }
                .range div { display: flex; justify-content: space-between; width: 655px; height: 15px; padding: 0 2px 0 6px; background: #676767; line-height: 14px; }
                .range i { display: inline-block; width: 9px; height: 9px; margin: 0 4px; border: 1px solid #333; border-width: 0 1px 1px 0; vertical-align: -2px; }
                .range span:last-child i { margin-right: 1px; }
                .tri { width: 15px; height: 8px; }
                .set { width: 100px; appearance: none; }
                .mel { padding-left: 23px; }
                .mel label { width: 33px; }
                .mel input, output { flex: 1; height: 23px; background: #2a2a2a; border: 1px solid #555; }
                .mel output { background: #000; margin-left: 3px; border-color: #222; }
                p { flex: 1; height: 22px; margin: 0; padding: 0 11px; line-height: 20px; border: 1px solid #2a2a2a; outline: 1px solid #555; outline-offset: -1px; }
            </style>
            <div class="bar time">
                <div class="ticks">${frames}</div>
                <input class="field num" aria-label="Current frame" value="1.00">
                <div class="play">${play.map(p => `<button aria-label="${p}">${svg(p, 20)}</button>`).join('')}</div>
            </div>
            <div class="bar">
                <input class="field num" aria-label="Animation start" value="1.00">
                <input class="field num" aria-label="Playback start" value="1.00">
                <div class="range"><div><span><i></i>1</span><span>24<i></i></span></div></div>
                <input class="field num" aria-label="Playback end" value="24.00">
                <input class="field num" aria-label="Animation end" value="48.00">
                <svg class="tri" viewBox="0 0 14 8"><path d="M3 1h8L7 6z" fill="none" stroke="#999"/></svg>
                <select class="field set" aria-label="Anim layer"><option>No Anim Layer</option></select>
                <svg class="tri" viewBox="0 0 14 8"><path d="M3 1h8L7 6z" fill="none" stroke="#999"/></svg>
                <select class="field set" aria-label="Character set"><option>No Character Set</option></select>
                <button class="icon" aria-label="Auto key">${svg('key', 17)}</button>
                <button class="icon" aria-label="Preferences">${svg('prefs', 15)}</button>
            </div>
            <div class="bar mel">
                <label for="mel">MEL</label>
                <input id="mel">
                <output></output>
                <button class="icon" aria-label="Script editor">${svg('script', 15)}</button>
            </div>
            <div class="bar help"><p>No help available for this tool</p></div>
        `;
    }
}

// ---------- red pen marks ----------
class PenMarks extends HTMLElement {
    connectedCallback() {
        this.attachShadow({ mode: 'open' });
        this.shadowRoot.innerHTML = `
            <style>
                :host { display: block; pointer-events: none; }
                svg { display: block; overflow: visible; }
            </style>
            <svg width="480" height="1040" fill="none" stroke="#c4161b" stroke-width="1.600" stroke-linecap="round" stroke-linejoin="round">
                <path d="M102 139Q86 133 79 148Q74 160 85 183Q120 186 170 182L271 181Q275 165 276 152Q274 147 262 148"/>
                <path d="M86 143Q120 142 168 146T270 148" stroke-width="2.500"/>
                <path d="M88 183L185 182L271 181" stroke-width="2.500"/>
                <path d="M215 317Q216 334 220 347Q245 342 269 343T311 348Q312 330 316 318Q290 311 269 313T221 315"/>
                <path d="M210 427Q300 427 383 431M210 428Q211 460 215 491M381 432Q374 450 376 470Q378 485 374 492"/>
                <path d="M337 431L383 432M215 488Q300 490 340 488L382 486" stroke-width="2.500"/>
                <path d="M210 593Q260 590 293 588M210 593Q215 615 215 639M297 585L299 635M304 587L302 640"/>
                <path d="M213 638Q260 633 309 632" stroke-width="2.300"/>
                <path d="M122 813Q129 840 123 880T116 979M133 833Q124 870 127 1006M139 820Q180 815 260 816T452 817"/>
                <path d="M116 968V978M180 820L295 820Q380 823 412 825T450 824" stroke-width="2.500"/>
                <path d="M449 827Q436 870 438 1007M444 847Q460 920 442 1003M147 995Q180 994 210 1000T270 1010Q350 1021 400 1016Q430 1011 461 1012"/>
                <path d="M173 1007Q185 1013 253 1010Q290 1003 350 1005T461 1012" stroke-width="2"/>
            </svg>
        `;
    }
}

class MayaDesktop extends HTMLElement {
    connectedCallback() {
        this.attachShadow({ mode: 'open' });
        this.shadowRoot.innerHTML = `
            <style>
                :host { display: flex; flex-direction: column; position: relative; min-height: 100vh; box-sizing: border-box; padding: 147px 0 26px; overflow: hidden; }
                .app { flex: 1; display: flex; flex-direction: column; background: #444; box-shadow: 0 1px #ddd; }
                .main { flex: 1; display: flex; }
                app-window, pen-marks { position: absolute; }
                .bake { left: 56px; top: 153px; width: 596px; height: 937px; --frame: #8d9bb0; --edge: #5e6c80; --bar: linear-gradient(#a3afbf, #8596ab 40%, #8c9cb2); --title: #dde1e6; }
                .uv { left: 1001px; top: 159px; width: 846px; height: 827px; --frame: #3d86d0; --edge: #205c9e; --bar: linear-gradient(#4f9ae2, #3a80c6 30%, #4089d8); --title: #fff; }
                pen-marks { left: 0; top: 0; }
            </style>
            <div class="app">
                <div class="main">
                    <tool-box></tool-box>
                    <view-port></view-port>
                    <attribute-editor></attribute-editor>
                </div>
                <bottom-bars></bottom-bars>
            </div>
            <app-window class="bake" heading="Mental Ray Baking Options" menu="Edit,Help"><bake-options></bake-options></app-window>
            <app-window class="uv" heading="UV Texture Editor" menu="Polygons,Subdivs,View,Select,Tool,Image,Textures,UV Sets,Help">
                <uv-toolbar></uv-toolbar>
                <uv-canvas></uv-canvas>
            </app-window>
            <pen-marks></pen-marks>
        `;
    }
}

customElements.define('app-window', AppWindow);
customElements.define('option-row', OptionRow);
customElements.define('option-group', OptionGroup);
customElements.define('bake-options', BakeOptions);
customElements.define('uv-toolbar', UvToolbar);
customElements.define('uv-canvas', UvCanvas);
customElements.define('tool-box', ToolBox);
customElements.define('view-port', ViewPort);
customElements.define('attribute-editor', AttributeEditor);
customElements.define('bottom-bars', BottomBars);
customElements.define('pen-marks', PenMarks);
customElements.define('maya-desktop', MayaDesktop);
</script>
</body>
</html>
